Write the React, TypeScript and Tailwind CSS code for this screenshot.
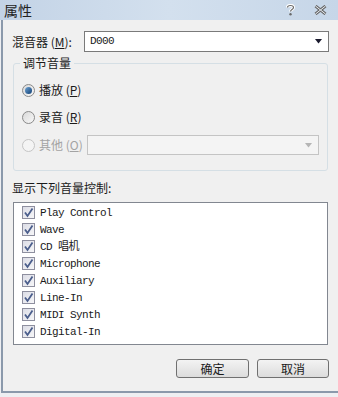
import React from 'react';

const cjk = '"Noto Sans CJK SC", "Noto Sans", sans-serif';
const mono = '"Liberation Mono", "Noto Sans CJK SC", monospace';

function Check() {
  return (
    <span className="w-[13px] h-[13px] border border-[#8e8f9f] bg-gradient-to-br from-[#dcdde6] to-[#f6f6f8] flex items-center justify-center shrink-0">
      <svg width="11" height="11" viewBox="0 0 11 11">
        <path d="M2 5.5 L4.5 9 L9.5 1.5" fill="none" stroke="#4b5e8c" strokeWidth="1.8" />
      </svg>
    </span>
  );
}

function Radio({ checked, disabled }: { checked?: boolean; disabled?: boolean }) {
  return (
    <span
      className={
        'w-[13px] h-[13px] rounded-full border flex items-center justify-center shrink-0 ' +
        (disabled
          ? 'border-[#c5c5c5] bg-[#f4f4f4]'
          : 'border-[#8a8a8a] bg-gradient-to-br from-[#d9d9d9] to-[#f8f8f8]')
      }
    >
      {checked && (
        <span className="w-[7px] h-[7px] rounded-full bg-gradient-to-br from-[#6fa4d4] to-[#0d3f74]" />
      )}
    </span>
  );
}

function Arrow({ color }: { color: string }) {
  return (
    <svg width="8" height="5" viewBox="0 0 8 5">
      <path d="M0 0 H7 L3.5 4.5 Z" fill={color} />
    </svg>
  );
}

const items = [
  'Play Control',
  'Wave',
  'CD 唱机',
  'Microphone',
  'Auxiliary',
  'Line-In',
  'MIDI Synth',
  'Digital-In',
];

export default function App() {
  return (
    <div className="w-[338px] h-[397px] bg-[#eeeff2] overflow-hidden text-[12px] text-[#1a1a1a]" style={{ fontFamily: cjk }}>
      {/* 标题栏 */}
      <div className="h-[20px] bg-gradient-to-r from-[#c3d3e6] via-[#d3e0ee] to-[#c6d6e8] flex items-center pl-[4px] pr-[11px]">
        <span className="text-[14px] leading-[16px] text-[#222]">属性</span>
        <div className="ml-auto flex items-center gap-[19px]">
          <svg width="9" height="12" viewBox="0 0 9 12">
            <path d="M1.5 3.5 C1.5 0.8 7.5 0.8 7.5 3.5 C7.5 5.5 4.5 5.5 4.5 7.5" fill="none" stroke="#ffffff" strokeWidth="3" />
            <path d="M1.5 3.5 C1.5 0.8 7.5 0.8 7.5 3.5 C7.5 5.5 4.5 5.5 4.5 7.5" fill="none" stroke="#6a6a6a" strokeWidth="1.2" />
            <circle cx="4.5" cy="10.3" r="1.2" fill="#6a6a6a" />
          </svg>
          <svg width="13" height="10" viewBox="0 0 13 10">
            <path d="M1.5 1 L11.5 9 M11.5 1 L1.5 9" stroke="#6a6a6a" strokeWidth="3" />
            <path d="M1.5 1 L11.5 9 M11.5 1 L1.5 9" stroke="#e8edf3" strokeWidth="1" />
          </svg>
        </div>
      </div>

      {/* 内容 */}
      <div className="ml-[1px] h-[373px] border-l-2 border-b-2 border-[#8b99ab] bg-[#f0f0f0] flex flex-col">
        <div className="mt-[11px] flex items-center pl-[9px] pr-[9px]">
          <span className="w-[72px] leading-[16px]">
            混音器 (<span className="underline">M</span>):
          </span>
          <div className="h-[21px] flex-1 border border-[#7a7a7a] bg-white flex items-center pl-[5px] pr-[5px]">
            <span className="text-[11px] tracking-[-0.6px]" style={{ fontFamily: mono }}>D000</span>
            <span className="ml-auto">
              <Arrow color="#1a1a2e" />
            </span>
          </div>
        </div>

        <fieldset className="mt-[4px] mx-[10px] h-[115px] border border-[#d5dfe5] rounded-[3px] flex flex-col">
          <legend className="ml-[6px] px-[3px] leading-[14px]">调节音量</legend>
          <div className="pl-[8px] pt-[12px] flex flex-col">
            <div className="h-[16px] flex items-center gap-[4px]">
              <Radio checked />
              <span>
                播放 (<span className="underline">P</span>)
              </span>
            </div>
            <div className="mt-[11px] h-[16px] flex items-center gap-[4px]">
              <Radio />
              <span>
                录音 (<span className="underline">R</span>)
              </span>
            </div>
            <div className="mt-[10px] h-[20px] flex items-center gap-[4px] text-[#a3a3a3]">
              <Radio disabled />
              <span className="w-[44px]">
                其他 (<span className="underline">O</span>)
              </span>
              <div className="h-[20px] w-[232px] border border-[#c4c4c4] bg-[#f4f4f4] flex items-center justify-end pr-[5px]">
                <Arrow color="#b5b5b5" />
              </div>
            </div>
          </div>
        </fieldset>

        <div className="mt-[9px] pl-[9px] leading-[16px]">显示下列音量控制:</div>

        <div className="mt-[6px] mx-[10px] h-[143px] border border-[#828790] bg-white pt-[1px] pl-[8px] flex flex-col">
          {items.map((it) => (
            <div key={it} className="h-[17px] flex items-center gap-[5px]">
              <Check />
              <span className="text-[11px] tracking-[-0.6px] leading-[14px]" style={{ fontFamily: mono }}>
                {it}
              </span>
            </div>
          ))}
        </div>

        <div className="mt-[14px] flex justify-end gap-[8px] pr-[9px]">
          <button className="w-[73px] h-[19px] rounded-[3px] border border-[#707070] bg-gradient-to-b from-[#f3f3f3] to-[#dcdcdc] text-[12px] leading-none">
            确定
          </button>
          <button className="w-[72px] h-[19px] rounded-[3px] border border-[#707070] bg-gradient-to-b from-[#f3f3f3] to-[#dcdcdc] text-[12px] leading-none">
            取消
          </button>
        </div>
      </div>
    </div>
  );
}
